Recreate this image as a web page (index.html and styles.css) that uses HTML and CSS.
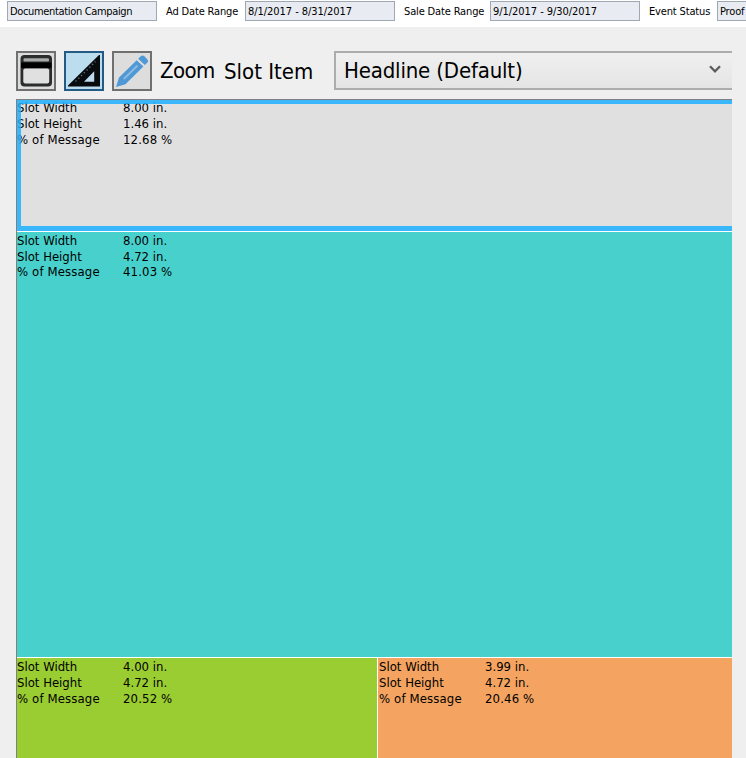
FILE: styles.css
```css
* { box-sizing: border-box; }
body {
  margin: 0;
  height: 758px;
  overflow: hidden;
  background: #efefef;
  color: #000;
  font-family: "DejaVu Sans Condensed", "DejaVu Sans", sans-serif;
  font-stretch: condensed;
}
.info {
  display: flex;
  height: 27px;
  padding: 1px 0 0 7px;
  background: #fff;
  font-size: 11px;
  line-height: 21px;
  letter-spacing: -0.15px;
  white-space: nowrap;
  overflow: hidden;
}
.field {
  flex: none;
  width: 150px;
  height: 20px;
  padding-left: 2px;
  border: 1px solid #a0a8b4;
  background: #e8ecf2;
  line-height: 19px;
}
.name { letter-spacing: -0.34px; }
.dates { letter-spacing: -0.05px; }
.info label { flex: none; padding-left: 9px; }
.ad { width: 88px; }
.sale { width: 95px; }
.event { width: 77px; }
.toolbar {
  display: flex;
  height: 72px;
  padding: 24px 14px 0 16px;
}
.tool {
  flex: none;
  width: 40px;
  height: 40px;
  margin-right: 8px;
  padding: 0;
  border: 2px solid #707070;
  background: #ddd;
}
.tool.active { border-color: #245a86; background: #bcddee; }
.tool svg { display: block; width: 36px; height: 36px; }
.soft { filter: blur(.45px); }
.zoom, .item { flex: none; font-size: 22px; line-height: 40px; white-space: nowrap; }
.zoom { width: 64px; letter-spacing: -0.6px; }
.item { width: 110px; line-height: 42px; }
.select {
  flex: 1;
  display: flex;
  justify-content: space-between;
  height: 39px;
  padding: 0 11px 0 8px;
  border: 2px solid #acacac;
  border-right: 0;
  background: linear-gradient(#f0f0f0, #e4e4e4);
  font-size: 22px;
  line-height: 35px;
  letter-spacing: -0.17px;
}
.chevron { width: 12px; height: 9px; margin-top: 12px; }
.canvas {
  display: grid;
  grid-template-columns: 360px 354px;
  grid-template-rows: 131px 425px 100px;
  gap: 1px;
  width: 716px;
  height: 659px;
  margin-left: 16px;
  border: 1px solid #808080;
  border-width: 1px 0 0 1px;
  background: #fff;
}
.slot { position: relative; }
.headline, .teal { grid-column: 1 / 3; }
.headline { background: #e0e0e0; }
.headline::after {
  content: "";
  position: absolute;
  inset: 0;
  border: 4px solid rgba(30, 175, 255, .86);
  border-right: 0;
  border-bottom-width: 5px;
}
.teal { background: #48d1cc; }
.green { background: #9acd32; }
.orange { background: #f4a460; }
dl {
  display: grid;
  grid-template-columns: 106px 80px;
  grid-auto-rows: 16px;
  margin: 0;
  padding: 1px 0 0 0;
  font-size: 13px;
  line-height: 16px;
  white-space: nowrap;
}
.headline dl { padding-top: 0; }
.teal dl { grid-template-rows: 16px 15px; }
.orange dl { padding-left: 1px; }
dd { margin: 0; }
.m { letter-spacing: 0.14px; }
.p { letter-spacing: 0.15px; }
```

FILE: index.html
```html
<!DOCTYPE html>
<html lang="en">
<head>
<meta charset="utf-8">
<title>Slot Layout</title>
<link rel="stylesheet" href="styles.css">
</head>
<body>
<header class="info">
  <div class="field name"><span>Documentation Campaign</span></div>
  <label class="ad"><span>Ad Date Range</span></label>
  <div class="field dates"><span>8/1/2017 - 8/31/2017</span></div>
  <label class="sale"><span>Sale Date Range</span></label>
  <div class="field dates"><span>9/1/2017 - 9/30/2017</span></div>
  <label class="event"><span>Event Status</span></label>
  <div class="field status"><span>Proof</span></div>
</header>
<main>
  <div class="toolbar">
    <button class="tool" aria-label="Window">
      <svg class="soft" viewBox="0 0 36 36"><rect x="2.5" y="2" width="31.5" height="31.5" rx="4" fill="#2b2d2c"/><rect x="5.5" y="5.2" width="25.5" height="3.3" rx="1.2" fill="#a9abaa"/><rect x="3" y="9.5" width="30.5" height="5.5" fill="#000"/><rect x="5.3" y="15.6" width="25.9" height="15" rx="2" fill="#e0e0e0"/></svg>
    </button>
    <button class="tool active" aria-label="Measurements">
      <svg class="soft" viewBox="0 0 36 36"><path fill="#090c0e" fill-rule="evenodd" d="M34 2V33.5H2v-1L33 2ZM28.2 18.2 18 28.7H28.2Z"/><path d="M9.5 28.5 29.5 8.5" stroke="#56636a" stroke-width="1.5" stroke-dasharray="1.5 2.4" fill="none"/></svg>
    </button>
    <button class="tool" aria-label="Edit">
      <svg class="soft" viewBox="0 0 36 36"><path fill="#4f98d6" d="M2 34 5 24.5 22.7 7.2l6.7 6.3L11.5 31.2ZM24.2 5.7l2.5-2.5c1.2-1.2 2.6-1 4 .4l2.1 2.1c1.5 1.5 1.7 2.8.4 4.1l-2.4 2.3Z"/><path d="M9.8 26 23.5 12.5" stroke="#8bb9e0" stroke-width="2"/></svg>
    </button>
    <span class="zoom"><span>Zoom</span></span>
    <span class="item"><span>Slot Item</span></span>
    <div class="select"><span>Headline (Default)</span>
      <svg class="chevron" viewBox="0 0 12 9"><path d="m1 1.3 5 5 5-5" fill="none" stroke="#5c5c5c" stroke-width="2.3"/></svg>
    </div>
  </div>
  <div class="canvas">
    <section class="slot headline">
      <dl><dt>Slot Width</dt><dd>8.00 in.</dd><dt>Slot Height</dt><dd>1.46 in.</dd><dt class="m">% of Message</dt><dd class="p">12.68 %</dd></dl>
    </section>
    <section class="slot teal">
      <dl><dt>Slot Width</dt><dd>8.00 in.</dd><dt>Slot Height</dt><dd>4.72 in.</dd><dt class="m">% of Message</dt><dd class="p">41.03 %</dd></dl>
    </section>
    <section class="slot green">
      <dl><dt>Slot Width</dt><dd>4.00 in.</dd><dt>Slot Height</dt><dd>4.72 in.</dd><dt class="m">% of Message</dt><dd class="p">20.52 %</dd></dl>
    </section>
    <section class="slot orange">
      <dl><dt>Slot Width</dt><dd>3.99 in.</dd><dt>Slot Height</dt><dd>4.72 in.</dd><dt class="m">% of Message</dt><dd class="p">20.46 %</dd></dl>
    </section>
  </div>
</main>
</body>
</html>
```
